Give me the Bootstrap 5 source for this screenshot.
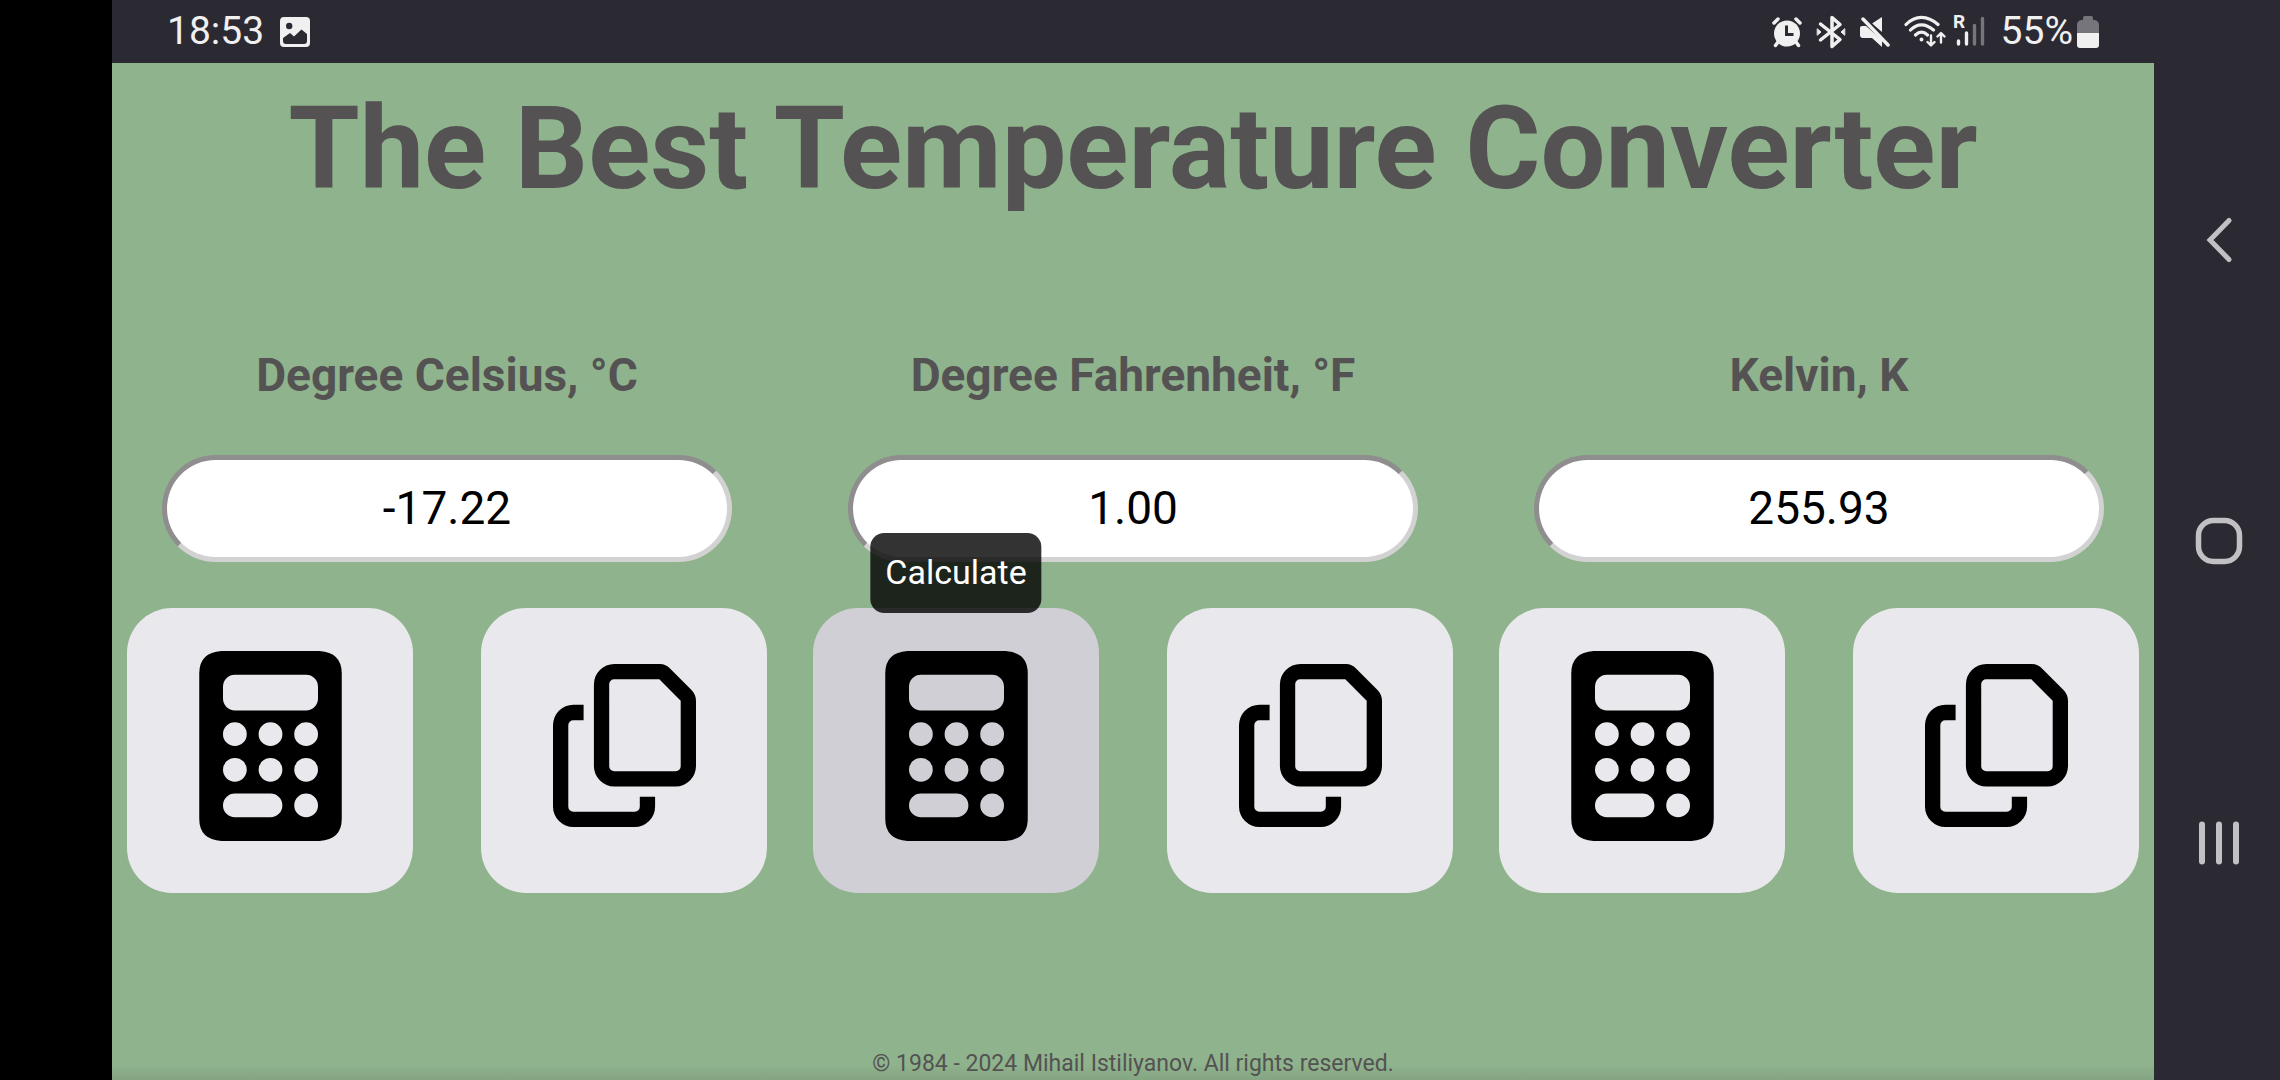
<!DOCTYPE html>
<html lang="en">
<head>
<meta charset="utf-8">
<meta name="viewport" content="width=device-width, initial-scale=1">
<title>The Best Temperature Converter</title>
<link rel="stylesheet" href="https://cdn.jsdelivr.net/npm/bootstrap@5.3.0/dist/css/bootstrap.min.css">
<style>
  body { font-family: Roboto, "Liberation Sans", sans-serif; background: #000; color: #545252; }
  .cutout { width: 112px; background: #000; }
  .app-column { min-width: 0; }
  .status-bar { height: 63px; padding: 0 55px; background: #2b2932; color: #f0f0f0; font-size: 39px; line-height: 60px; }
  .status-bar span { padding-bottom: 2px; }
  .status-icons { gap: 14px; }
  .converter { background: #8fb38d linear-gradient(to top, #00000014, #0000 16px) no-repeat; }
  .app-title { font-size: 115px; font-weight: 700; line-height: 136px; margin: 18px 0 0; }
  .units { padding: 0 15px; gap: 46px; margin-top: 130px; }
  .unit { flex: 1 1 0; min-width: 0; }
  .unit-label { font-size: 46px; font-weight: 700; line-height: 56px; margin-bottom: 52px; }
  .unit-value { height: 107px; margin: 0 35px 46px; padding: 0 20px 2px; border: 5px solid; border-color: #8f8d8e #d3d2d3 #d3d2d3 #8f8d8e; border-radius: 54px; background: #fff; color: #000; font-size: 46px; text-align: center; min-width: 0; }
  .unit-actions { gap: 68px; }
  .action { flex: 1 1 0; height: 285px; padding: 0 0 9px; border: 0; border-radius: 45px; background: #e9e8ec; color: #000; }
  .action.pressed { background: #d1cfd6; }
  .hint { left: 50%; bottom: 280px; transform: translateX(-50%); padding: 14px 15px 16px; border-radius: 14px; background: #000c; color: #fff; font-size: 34px; line-height: 50px; }
  .legal { font-size: 23px; line-height: 30px; margin-bottom: 1px; }
  .nav-keys { width: 126px; padding: 3px 0 0 4px; background: #2b2932; }
  .nav-key { height: 28%; border: 0; background: none; color: #c2c0c3; }
</style>
<script src="https://cdn.jsdelivr.net/npm/bootstrap@5.3.0/dist/js/bootstrap.bundle.min.js"></script>
</head>
<body>
<svg class="d-none" aria-hidden="true">
  <symbol id="calc" viewBox="0 0 384 512">
    <path fill="currentColor" fill-rule="evenodd" d="M60 0H324Q384 4 384 60V452Q384 508 324 512H60Q0 508 0 452V60Q0 4 60 0ZM96 64A32 32 0 0 0 64 96V128A32 32 0 0 0 96 160H288A32 32 0 0 0 320 128V96A32 32 0 0 0 288 64ZM64 224a32 32 0 1 0 64 0a32 32 0 1 0-64 0ZM160 224a32 32 0 1 0 64 0a32 32 0 1 0-64 0ZM256 224a32 32 0 1 0 64 0a32 32 0 1 0-64 0ZM64 320a32 32 0 1 0 64 0a32 32 0 1 0-64 0ZM160 320a32 32 0 1 0 64 0a32 32 0 1 0-64 0ZM256 320a32 32 0 1 0 64 0a32 32 0 1 0-64 0ZM96 384a32 32 0 0 0 0 64H192a32 32 0 0 0 0-64ZM256 416a32 32 0 1 0 64 0a32 32 0 1 0-64 0Z"/>
  </symbol>
  <symbol id="copy" viewBox="0 0 143 164">
    <path fill="currentColor" fill-rule="evenodd" d="M61.300 0H107Q113 0 117 4.500L138.500 26Q143 30.500 143 37V102.300A20.400 20.400 0 0 1 122.600 122.500H61.300A20.400 20.400 0 0 1 40.900 102.300V20.400A20.400 20.400 0 0 1 61.300 0ZM61.300 15.300A5 5 0 0 0 56.200 20.400V102.200A5 5 0 0 0 61.300 107.300H122.600A5 5 0 0 0 127.700 102.200V36.700L106.300 15.300Z"/>
    <path fill="currentColor" d="M30.600 40.800V56.200H20.400A5 5 0 0 0 15.300 61.300V142.700A5 5 0 0 0 20.400 147.800H81.700A5 5 0 0 0 86.800 142.700V132.800H102.100V142.700A20.400 20.400 0 0 1 81.700 163H20.400A20.400 20.400 0 0 1 0 142.700V61.300A20.400 20.400 0 0 1 20.400 40.800Z"/>
  </symbol>
</svg>

<div class="d-flex min-vh-100">
  <div class="cutout flex-shrink-0"></div>

  <div class="app-column d-flex flex-column flex-grow-1">
    <header class="status-bar d-flex align-items-center justify-content-between">
      <div class="d-flex align-items-center">
        <span>18:53</span>
        <svg class="ms-3" width="30" height="30" viewBox="0 0 30 30" role="img" aria-label="Screenshot saved">
          <path fill="currentColor" fill-rule="evenodd" d="M4 0H26A4 4 0 0 1 30 4V26A4 4 0 0 1 26 30H4A4 4 0 0 1 0 26V4A4 4 0 0 1 4 0ZM6 9a3.200 3.200 0 1 0 6.400 0a3.200 3.200 0 1 0-6.400 0ZM3 21V24Q3 27 6 27H24Q27 27 27 24V17L21.500 12.500L14 19.500L10 16Z"/>
        </svg>
      </div>
      <div class="status-icons d-flex align-items-center">
        <svg width="30" height="32" viewBox="0 0 30 32" fill="none" stroke="currentColor" stroke-linecap="round" role="img" aria-label="Alarm">
          <circle cx="15" cy="17.500" r="13" fill="currentColor" stroke="none"/>
          <path stroke-width="3.500" d="M2 7L6 3M28 7L24 3M6 26L3.500 29.500M24 26L26.500 29.500"/>
          <path stroke="#2b2932" stroke-width="3" stroke-linecap="butt" d="M14.500 9.500V18.500H21.500"/>
        </svg>
        <svg width="30" height="34" viewBox="0 0 30 34" fill="none" stroke="currentColor" stroke-width="3.500" stroke-linecap="round" stroke-linejoin="round" role="img" aria-label="Bluetooth">
          <path d="M4.500 9L24 24.500L16 31.500V2.500L24 9.500L4.500 25"/>
          <path d="M1.500 14L5 17L1.500 20ZM28.500 14L25 17L28.500 20Z" fill="currentColor" stroke-width="1"/>
        </svg>
        <svg width="30" height="32" viewBox="0 0 30 32" role="img" aria-label="Muted">
          <path fill="currentColor" d="M22 1V16L12 7.500ZM2 10H6L22 24V31L12 22H3Q0 22 0 19V12Q0 10 2 10Z"/>
          <path fill="none" stroke="#2b2932" stroke-width="2" d="M6 2.500L25 22.500"/>
          <path fill="none" stroke="currentColor" stroke-width="3.500" stroke-linecap="round" d="M3 3L28 29"/>
        </svg>
        <svg width="42" height="34" viewBox="0 0 42 34" fill="none" stroke="currentColor" stroke-width="3.200" stroke-linecap="round" role="img" aria-label="Wi-Fi">
          <path d="M2 9.500Q9 2.300 17.500 2.300T34 9.500M6.500 15Q11.500 9.800 17.500 9.800T29.500 15M11.500 20Q14.500 17.200 17.500 17.200T23.500 20"/>
          <circle cx="17.500" cy="24.500" r="1" stroke-width="2"/>
          <path stroke-width="2.400" stroke-linejoin="round" d="M27 20.500V30M23.500 27L27 30.500L30.500 27M37 27.500V18.500M33.500 21.500L37 18L40.500 21.500"/>
        </svg>
        <svg width="27" height="34" viewBox="7 0 27 34" overflow="visible" role="img" aria-label="Roaming signal">
          <text x="0" y="13" font-size="19" font-weight="700" fill="currentColor">R</text>
          <g fill="none" stroke="currentColor" stroke-width="3.400" stroke-linecap="round">
            <path d="M5.500 26V29M13.500 18V29"/>
            <path stroke="#77757c" d="M21.500 10.500V29M29.500 3.500V29"/>
          </g>
        </svg>
        <div class="d-flex align-items-center gap-1">
          <span>55%</span>
          <svg width="22" height="34" viewBox="0 0 22 34" role="img" aria-label="Battery">
            <path fill="#77757c" d="M8 1H14Q16 1 16 3V5H18Q22 6 22 10V19H0V10Q0 6 4 5H6V3Q6 1 8 1Z"/>
            <path fill="currentColor" d="M0 18H22V30Q22 33 19 33H3Q0 33 0 30Z"/>
          </svg>
        </div>
      </div>
    </header>

    <main class="converter d-flex flex-column flex-grow-1 text-center">
      <h1 class="app-title">The Best Temperature Converter</h1>

      <div class="units d-flex">
        <section class="unit d-flex flex-column">
          <label class="unit-label" for="celsius">Degree Celsius, °C</label>
          <input class="unit-value" id="celsius" type="text" inputmode="decimal" value="-17.22">
          <div class="unit-actions d-flex">
            <button class="action d-flex align-items-center justify-content-center" type="button" aria-label="Calculate"><svg width="143" height="190"><use href="#calc"/></svg></button>
            <button class="action d-flex align-items-center justify-content-center" type="button" aria-label="Copy"><svg width="143" height="164"><use href="#copy"/></svg></button>
          </div>
        </section>

        <section class="unit d-flex flex-column">
          <label class="unit-label" for="fahrenheit">Degree Fahrenheit, °F</label>
          <input class="unit-value" id="fahrenheit" type="text" inputmode="decimal" value="1.00">
          <div class="unit-actions d-flex">
            <button class="action pressed position-relative d-flex align-items-center justify-content-center" type="button" aria-describedby="calc-hint" aria-label="Calculate"><svg width="143" height="190"><use href="#calc"/></svg><span class="hint position-absolute" id="calc-hint" role="tooltip">Calculate</span></button>
            <button class="action d-flex align-items-center justify-content-center" type="button" aria-label="Copy"><svg width="143" height="164"><use href="#copy"/></svg></button>
          </div>
        </section>

        <section class="unit d-flex flex-column">
          <label class="unit-label" for="kelvin">Kelvin, K</label>
          <input class="unit-value" id="kelvin" type="text" inputmode="decimal" value="255.93">
          <div class="unit-actions d-flex">
            <button class="action d-flex align-items-center justify-content-center" type="button" aria-label="Calculate"><svg width="143" height="190"><use href="#calc"/></svg></button>
            <button class="action d-flex align-items-center justify-content-center" type="button" aria-label="Copy"><svg width="143" height="164"><use href="#copy"/></svg></button>
          </div>
        </section>
      </div>

      <footer class="legal mt-auto">© 1984 - 2024 Mihail Istiliyanov. All rights reserved.</footer>
    </main>
  </div>

  <nav class="nav-keys flex-shrink-0 d-flex flex-column justify-content-center vh-100" aria-label="System navigation">
    <button class="nav-key d-flex align-items-center justify-content-center" type="button" aria-label="Back">
      <svg width="28" height="46" viewBox="0 0 28 46" fill="none" stroke="currentColor" stroke-width="5" stroke-linecap="round"><path d="M24 3.500L5 23L24 42.500"/></svg>
    </button>
    <button class="nav-key d-flex align-items-center justify-content-center" type="button" aria-label="Home">
      <svg width="48" height="48" viewBox="0 0 48 48" fill="none" stroke="currentColor" stroke-width="5.500"><rect x="3.500" y="3.500" width="41" height="41" rx="15"/></svg>
    </button>
    <button class="nav-key d-flex align-items-center justify-content-center" type="button" aria-label="Recent apps">
      <svg width="42" height="44" viewBox="0 0 42 44" fill="none" stroke="currentColor" stroke-width="6" stroke-linecap="round"><path d="M4 3.500V40.500M21 3.500V40.500M38 3.500V40.500"/></svg>
    </button>
  </nav>
</div>
</body>
</html>
